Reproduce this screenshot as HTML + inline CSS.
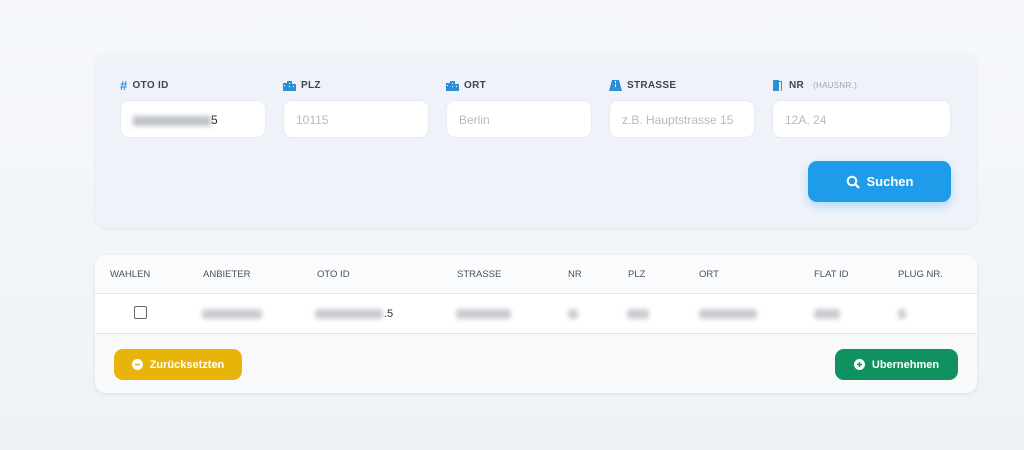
<!DOCTYPE html>
<html><head><meta charset="utf-8"><style>
*{box-sizing:border-box;margin:0;padding:0}
body{width:1024px;height:450px;background:linear-gradient(180deg,#f6f8fb 0%,#eef2f7 100%);font-family:"Liberation Sans",sans-serif;position:relative;overflow:hidden}
.card1{position:absolute;left:95px;top:53px;width:882px;height:175px;background:#eff3f9;border-radius:12px;box-shadow:0 1px 3px rgba(0,0,0,.08)}
.lbl{position:absolute;top:79px;height:12px;font-size:10px;font-weight:bold;color:#3d4650;letter-spacing:.3px;display:flex;align-items:center;gap:5px}
.lbl small{font-size:8px;font-weight:normal;color:#9aa3ad;margin-left:4px}
.ic{color:#2d8fd6}
.inp{position:absolute;top:100px;height:38px;background:#fff;border-radius:9px;border:1px solid #e6ebf1;font-size:12px;color:#b5bbc2;padding:12px 12px}
.btn{position:absolute;border-radius:9px;color:#fff;font-weight:bold;display:flex;align-items:center;justify-content:center;gap:7px}
.card2{position:absolute;left:95px;top:255px;width:882px;height:138px;background:#f7f9fb;border-radius:10px;box-shadow:0 1px 3px rgba(0,0,0,.1);overflow:hidden}
.hd{position:absolute;left:0;top:0;width:100%;height:39px;background:#fafbfc;border-bottom:1px solid #e3e7ec}
.rw{position:absolute;left:0;top:39px;width:100%;height:40px;background:#fff;border-bottom:1px solid #e3e7ec}
.th{position:absolute;top:14px;font-size:9.5px;color:#4a525b}
.bl{position:absolute;top:15px;height:10px;background:#c9cdd2;filter:blur(2.5px);border-radius:3px}
</style></head><body>
<div class="card1"></div>
<div class="lbl" style="left:120px"><span class="ic" style="font-size:13px">#</span> OTO ID</div>
<div class="lbl" style="left:283px"><svg width="13" height="11" viewBox="0 0 13 11"><path fill="#2d8fd6" d="M0 3h4v8H0zM4 1h5v10H4zM9 4h4v7H9z"/><path fill="#fff" d="M1 5h1v1H1zM6 3h1v1H6zM6 6h1v1H6zM10 6h1v1h-1z"/></svg>PLZ</div>
<div class="lbl" style="left:446px"><svg width="13" height="11" viewBox="0 0 13 11"><path fill="#2d8fd6" d="M0 3h4v8H0zM4 1h5v10H4zM9 4h4v7H9z"/><path fill="#fff" d="M1 5h1v1H1zM6 3h1v1H6zM6 6h1v1H6zM10 6h1v1h-1z"/></svg>ORT</div>
<div class="lbl" style="left:609px"><svg width="13" height="11" viewBox="0 0 13 11"><path fill="#2d8fd6" d="M3 0h7l3 11H0z"/><path fill="#fff" d="M6 1h1v2H6zM6 4h1v3H6z"/></svg>STRASSE</div>
<div class="lbl" style="left:772px"><svg width="12" height="12" viewBox="0 0 12 12"><path fill="#2d8fd6" d="M1 1h6v11H1zM7 2h3v10H9V3H7z"/></svg>NR <small>(HAUSNR.)</small></div>
<div class="inp" style="left:120px;width:146px;color:#222"><span style="display:inline-block;width:78px;height:10px;background:#bfc3c8;filter:blur(2.5px);vertical-align:middle"></span>5</div>
<div class="inp" style="left:283px;width:146px">10115</div>
<div class="inp" style="left:446px;width:146px">Berlin</div>
<div class="inp" style="left:609px;width:146px">z.B. Hauptstrasse 15</div>
<div class="inp" style="left:772px;width:179px">12A, 24</div>
<div class="btn" style="left:808px;top:161px;width:143px;height:41px;background:#1e9be9;font-size:13px;box-shadow:0 4px 10px rgba(30,155,233,.3)"><svg width="14" height="14" viewBox="0 0 14 14"><circle cx="6" cy="6" r="4.3" fill="none" stroke="#fff" stroke-width="2"/><path d="M9 9l4 4" stroke="#fff" stroke-width="2.2"/></svg>Suchen</div>
<div class="card2">
<div class="hd">
<span class="th" style="left:15px">WAHLEN</span><span class="th" style="left:108px">ANBIETER</span><span class="th" style="left:222px">OTO ID</span><span class="th" style="left:362px">STRASSE</span><span class="th" style="left:473px">NR</span><span class="th" style="left:533px">PLZ</span><span class="th" style="left:604px">ORT</span><span class="th" style="left:719px">FLAT ID</span><span class="th" style="left:803px">PLUG NR.</span>
</div>
<div class="rw">
<div style="position:absolute;left:39px;top:12px;width:13px;height:13px;border:1px solid #666;border-radius:2px;background:#fff"></div>
<div class="bl" style="left:107px;width:60px"></div>
<div class="bl" style="left:220px;width:68px"></div><span style="position:absolute;left:289px;top:14px;font-size:11px;color:#333">.5</span>
<div class="bl" style="left:361px;width:55px"></div>
<div class="bl" style="left:473px;width:10px"></div>
<div class="bl" style="left:532px;width:22px"></div>
<div class="bl" style="left:604px;width:58px"></div>
<div class="bl" style="left:719px;width:26px"></div>
<div class="bl" style="left:803px;width:8px"></div>
</div>
</div>
<div class="btn" style="left:114px;top:349px;width:128px;height:31px;background:#e8b40a;font-size:11px"><svg width="11" height="11"><circle cx="5.5" cy="5.5" r="5.5" fill="#fff"/><path d="M3 5.5h5" stroke="#e8b40a" stroke-width="1.5"/></svg>Zurücksetzten</div>
<div class="btn" style="left:835px;top:349px;width:123px;height:31px;background:#0f9160;font-size:11px"><svg width="11" height="11"><circle cx="5.5" cy="5.5" r="5.5" fill="#fff"/><path d="M3 5.5h5M5.5 3v5" stroke="#0f9160" stroke-width="1.5"/></svg>Ubernehmen</div>
</body></html>
